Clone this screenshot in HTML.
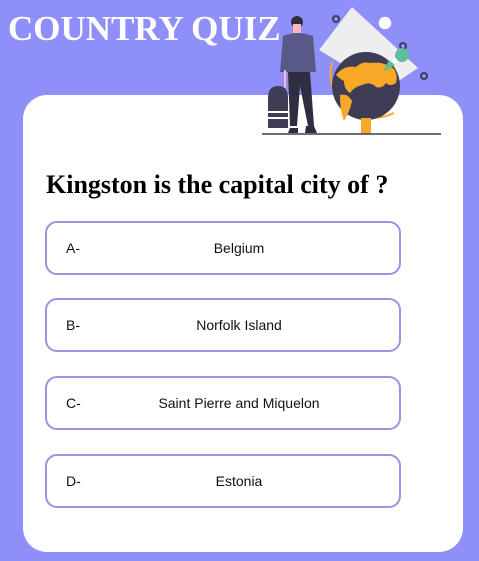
<!DOCTYPE html>
<html><head><style>
body{margin:0;width:479px;height:561px;background:#8f8ffa;position:relative;overflow:hidden;font-family:"Liberation Sans",sans-serif}
h1{position:absolute;left:8px;top:9px;margin:0;font:bold 35px "Liberation Serif",serif;color:#fff;letter-spacing:0}
.card{position:absolute;left:23px;top:95px;width:440px;height:457px;background:#fff;border-radius:24px}
h2{position:absolute;left:46px;top:170px;margin:0;font:bold 26px "Liberation Serif",serif;color:#000;white-space:nowrap}
.opt{position:absolute;left:45px;width:352px;height:50px;border:2px solid #9696e2;border-radius:12px;font-size:14px;color:#111}
.opt .l{position:absolute;left:19px;top:17px}
.opt .t{position:absolute;left:32px;right:0;top:17px;text-align:center}
svg{position:absolute;left:0;top:0}
</style></head><body>
<h1>COUNTRY QUIZ</h1>
<div class="card"></div>
<svg width="479" height="140">
<polygon points="352,7 418,68 385,90 319,50" fill="#eeeef0"/>
<circle cx="385" cy="23" r="7" fill="#fff" stroke="#8f8ffa" stroke-width="1.5"/>
<circle cx="336" cy="19" r="3" fill="none" stroke="#3f3d56" stroke-width="2"/>
<circle cx="403" cy="46" r="3" fill="none" stroke="#3f3d56" stroke-width="2"/>
<circle cx="424" cy="76" r="3" fill="none" stroke="#3f3d56" stroke-width="2"/>
<path d="M332 62 A44 44 0 0 0 394 113" fill="none" stroke="#f9a826" stroke-width="2"/>
<circle cx="366" cy="86" r="34" fill="#3f3d56"/>
<path d="M336 75 q8-10 20-8 q6-6 14-4 q14-2 24 6 q4 6 2 14 q-6 4-10 0 q-4 6-10 4 q-6-6-14-2 q-8 2-12 8 q-6-4-6-12 q-4-2-8-6z M340 95 q8-2 12 6 q-2 10-8 20 q-4-10-4-26z" fill="#f9a826"/>
<rect x="361" y="118" width="10" height="16" fill="#f9a826"/>
<path d="M395 55 a7 7 0 1 1 0 .1 M389 60 l-6 12 12-7z" fill="#5fbf9c"/>
<circle cx="395" cy="61" r="2.5" fill="#fff"/>
<line x1="262" y1="134" x2="441" y2="134" stroke="#3f3d56" stroke-width="1.5"/>
<circle cx="297" cy="22" r="6" fill="#2f2e41"/>
<rect x="293" y="24" width="8" height="9" fill="#ffb8b8"/>
<path d="M283 36 q14-6 30 0 l3 36 h-36z" fill="#575a89"/>
<path d="M288 72 h22 l4 54 h-6 l-8-40 -3 40 h-7z" fill="#2f2e41"/>
<rect x="284" y="70" width="2" height="18" fill="#ffb8b8"/>
<path d="M268 98 q0-12 10-12 q10 0 10 12 v30 h-20z" fill="#3f3d56"/>
<path d="M268 112 h20 M268 118 h20" stroke="#fff" stroke-width="2"/>
<path d="M290 128 h8 v5 h-10z M306 126 h8 l3 7 h-12z" fill="#2f2e41"/>
</svg>
<h2>Kingston is the capital city of ?</h2>
<div class="opt" style="top:221px"><span class="l">A-</span><span class="t">Belgium</span></div>
<div class="opt" style="top:298px"><span class="l">B-</span><span class="t">Norfolk Island</span></div>
<div class="opt" style="top:376px"><span class="l">C-</span><span class="t">Saint Pierre and Miquelon</span></div>
<div class="opt" style="top:454px"><span class="l">D-</span><span class="t">Estonia</span></div>
</body></html>
